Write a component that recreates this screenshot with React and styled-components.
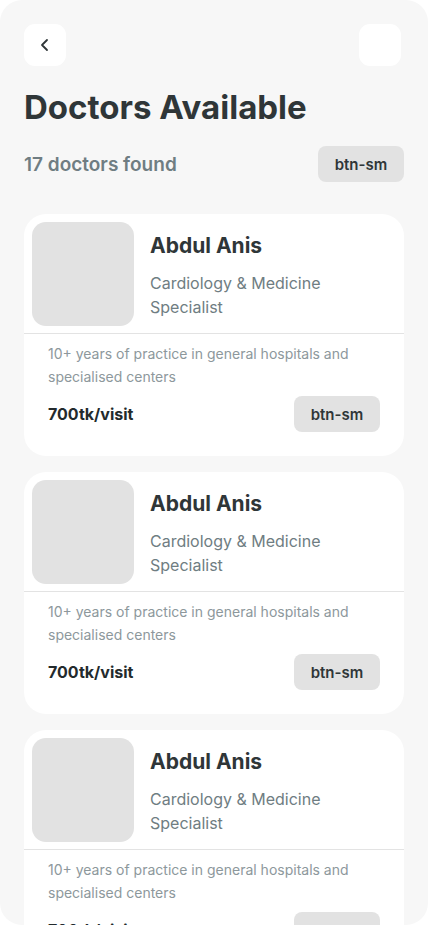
import React from 'react';
import styled, { createGlobalStyle } from 'styled-components';

const GlobalStyle = createGlobalStyle`
    html, body {
        margin: 0;
        padding: 0;
        background: #ffffff;
        font-family: Inter, "Noto Sans", sans-serif;
    }
    * { box-sizing: border-box; }
`

const Screen = styled.div`
    width: 428px;
    height: 925px;
    background-color: #f7f7f7;
    border-radius: 22px;
    overflow: hidden;
    padding: 24px 24px 0 24px;
`
const TopBar = styled.div`
    display: flex;
    justify-content: space-between;
    align-items: center;
    padding-right: 3px;
`
const IconButton = styled.button`
    width: 42px;
    height: 42px;
    border: none;
    border-radius: 11px;
    background: #ffffff;
    display: flex;
    align-items: center;
    justify-content: center;
    padding: 0;
    color: #2f3638;
`
const Title = styled.h1`
    margin: 21px 0 0 0;
    font-size: 33px;
    line-height: 40px;
    font-weight: 700;
    color: #2f3638;
`
const FoundRow = styled.div`
    display: flex;
    justify-content: space-between;
    align-items: center;
    margin-top: 19px;
`
const FoundText = styled.span`
    font-size: 19px;
    font-weight: 600;
    color: #6f7d82;
`
const SmallButton = styled.button`
    width: 86px;
    height: 36px;
    border: none;
    border-radius: 8px;
    background: #e2e2e2;
    color: #2f3638;
    font-family: inherit;
    font-size: 15px;
    font-weight: 600;
    padding: 0;
`
const List = styled.div`
    display: flex;
    flex-direction: column;
    gap: 16px;
    margin-top: 32px;
`
const Card = styled.div`
    background: #ffffff;
    border-radius: 22px;
    height: 242px;
    flex-shrink: 0;
    display: flex;
    flex-direction: column;
`
const CardTop = styled.div`
    display: flex;
    gap: 16px;
    padding: 8px 8px 7px 8px;
    border-bottom: 1px solid #e3e3e3;
`
const Avatar = styled.div`
    width: 102px;
    height: 104px;
    border-radius: 14px;
    background: #e2e2e2;
    flex-shrink: 0;
`
const Info = styled.div`
    padding-top: 10px;
`
const Name = styled.div`
    font-size: 21px;
    line-height: 28px;
    font-weight: 700;
    color: #2f3638;
`
const Specialty = styled.div`
    margin-top: 11px;
    font-size: 16px;
    line-height: 24px;
    color: #6f7d82;
`
const CardBottom = styled.div`
    padding: 8px 24px 0 24px;
`
const Description = styled.div`
    font-size: 14px;
    line-height: 23px;
    color: #8d989c;
`
const PriceRow = styled.div`
    display: flex;
    justify-content: space-between;
    align-items: center;
    margin-top: 8px;
`
const Price = styled.span`
    font-size: 16px;
    font-weight: 700;
    color: #232a2c;
`

const doctors = [1, 2, 3];

const DoctorCard = () => (
    <Card>
        <CardTop>
            <Avatar />
            <Info>
                <Name>Abdul Anis</Name>
                <Specialty>Cardiology &amp; Medicine<br />Specialist</Specialty>
            </Info>
        </CardTop>
        <CardBottom>
            <Description>10+ years of practice in general hospitals and specialised centers</Description>
            <PriceRow>
                <Price>700tk/visit</Price>
                <SmallButton>btn-sm</SmallButton>
            </PriceRow>
        </CardBottom>
    </Card>
);

export default function App() {
    return (
        <>
            <GlobalStyle />
            <Screen>
                <TopBar>
                    <IconButton>
                        <svg width="16" height="16" viewBox="0 0 16 16" fill="none">
                            <path d="M10 3L5 8l5 5" stroke="currentColor" strokeWidth="1.8" strokeLinecap="round" strokeLinejoin="round" />
                        </svg>
                    </IconButton>
                    <IconButton />
                </TopBar>
                <Title>Doctors Available</Title>
                <FoundRow>
                    <FoundText>17 doctors found</FoundText>
                    <SmallButton>btn-sm</SmallButton>
                </FoundRow>
                <List>
                    {doctors.map(d => <DoctorCard key={d} />)}
                </List>
            </Screen>
        </>
    );
}
